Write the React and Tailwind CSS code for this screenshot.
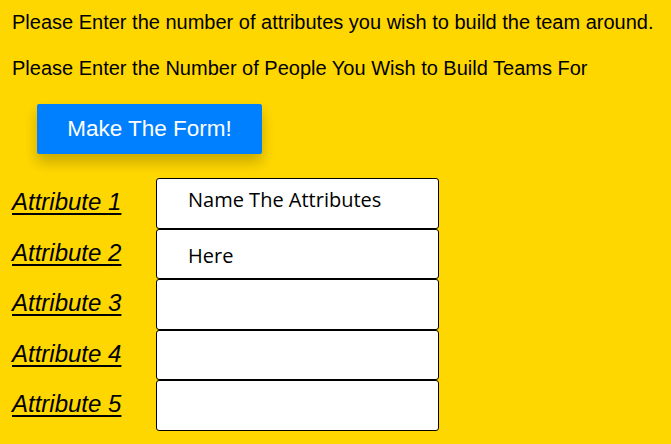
import React from 'react';

const rows = [1, 2, 3, 4, 5];

const App = () => {
    return (
        <div className="min-h-screen w-full bg-[#ffd700] text-black font-['Liberation_Sans',Arial,sans-serif] overflow-hidden">
            {/* Intro text */}
            <div className="pl-3 pt-[11px]">
                <p className="text-[20px] leading-[23px]">
                    Please Enter the number of attributes you wish to build the team around.
                </p>
                <p className="text-[20px] leading-[23px] mt-[23px]">
                    Please Enter the Number of People You Wish to Build Teams For
                </p>
            </div>

            {/* Button */}
            <div className="pl-[37px] pt-[24px]">
                <button className="w-[225px] h-[50px] bg-[#0080ff] text-white text-[22.5px] rounded-[2px] shadow-[0_8px_14px_rgba(0,0,0,0.22)]">
                    Make The Form!
                </button>
            </div>

            {/* Attribute rows */}
            <div className="pt-[24px] flex flex-col">
                {rows.map((n) => (
                    <div key={n} className="flex items-center h-[50.5px]">
                        <span className="w-[156px] pl-3 text-[24px] italic underline underline-offset-[3px] -mt-[2px]">
                            Attribute {n}
                        </span>
                        <div className="w-[283px] h-full bg-white border border-black rounded-[3px] pl-[31px] flex items-center font-['Open_Sans',sans-serif] text-[20px]">
                            {n === 1 && <span className="-mt-[6px]">Name The Attributes</span>}
                            {n === 2 && <span className="mt-[4px]">Here</span>}
                        </div>
                    </div>
                ))}
            </div>
        </div>
    );
};

export default App;
